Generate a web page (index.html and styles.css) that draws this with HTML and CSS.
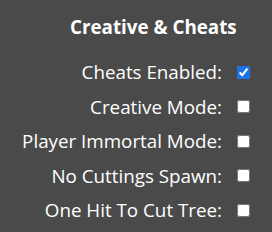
FILE: index.html
```html
<!DOCTYPE html>
<html lang="en">
<head>
    <meta charset="UTF-8">
    <title>Creative & Cheats</title>
    <link rel="stylesheet" href="styles.css">
</head>
<body>
    <div class="panel">
        <h2>Creative &amp; Cheats</h2>
        <div class="options">
            <label for="cheats">Cheats Enabled:</label>
            <input type="checkbox" id="cheats" checked>
            <label for="creative">Creative Mode:</label>
            <input type="checkbox" id="creative">
            <label for="immortal">Player Immortal Mode:</label>
            <input type="checkbox" id="immortal">
            <label for="cuttings">No Cuttings Spawn:</label>
            <input type="checkbox" id="cuttings">
            <label for="onehit">One Hit To Cut Tree:</label>
            <input type="checkbox" id="onehit">
        </div>
    </div>
</body>
</html>
```

FILE: styles.css
```css
body {
    margin: 0;
    background-color: #4a4a4a;
    color: white;
    font-family: "Open Sans", "Noto Sans", sans-serif;
}
.panel {
    width: 272px;
    height: 232px;
    padding-top: 16px;
    box-sizing: border-box;
}
h2 {
    margin: 0 0 17px 0;
    padding-left: 70px;
    font-size: 18.8px;
    line-height: 22px;
    font-weight: bold;
}
.options {
    display: grid;
    grid-template-columns: 222px auto;
    grid-auto-rows: 34.5px;
    column-gap: 15px;
    align-items: center;
}
.options label {
    text-align: right;
    font-size: 18.8px;
    line-height: 24px;
    white-space: nowrap;
}
.options input {
    margin: 0;
    width: 13px;
    height: 13px;
    accent-color: #1a73e8;
}
```
